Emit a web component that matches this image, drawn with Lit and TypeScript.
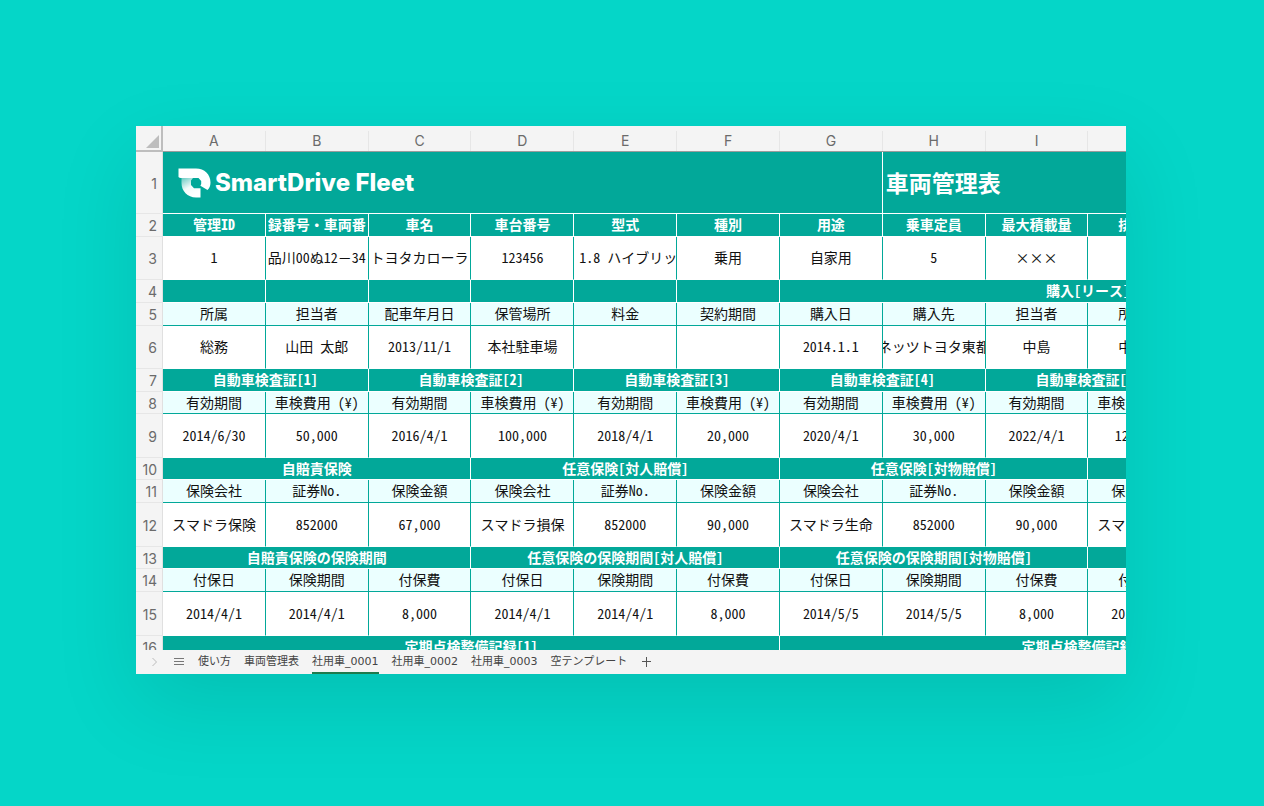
import { LitElement, html, css, nothing } from "lit";
import { customElement, state } from "lit/decorators.js";

type Kind = "band" | "head" | "data";
type Cell = string | [text: string, span: number];
interface Row {
  kind: Kind;
  height: number;
  cells: Cell[];
}

const COLUMNS = ["A", "B", "C", "D", "E", "F", "G", "H", "I", "J", "K", "L"];

const ROWS: Row[] = [
  {
    kind: "band",
    height: 23,
    cells: ["管理ID", "登録番号・車両番号", "車名", "車台番号", "型式", "種別", "用途", "乗車定員", "最大積載量", "排気量", "", ""],
  },
  {
    kind: "data",
    height: 43,
    cells: ["1", "品川00ぬ12－34", "トヨタカローラ", "123456", "1.8 ハイブリッド", "乗用", "自家用", "5", "×××", "", "", ""],
  },
  { kind: "band", height: 23, cells: ["", "", "", "", "", "", ["購入[リース]", 6]] },
  {
    kind: "head",
    height: 23,
    cells: ["所属", "担当者", "配車年月日", "保管場所", "料金", "契約期間", "購入日", "購入先", "担当者", "所在地", "", ""],
  },
  {
    kind: "data",
    height: 43,
    cells: ["総務", "山田 太郎", "2013/11/1", "本社駐車場", "", "", "2014.1.1", "ネッツトヨタ東都", "中島", "中央区", "", ""],
  },
  {
    kind: "band",
    height: 23,
    cells: [["自動車検査証[1]", 2], ["自動車検査証[2]", 2], ["自動車検査証[3]", 2], ["自動車検査証[4]", 2], ["自動車検査証[5]", 2], ["", 2]],
  },
  {
    kind: "head",
    height: 22,
    cells: ["有効期間", "車検費用 (¥)", "有効期間", "車検費用 (¥)", "有効期間", "車検費用 (¥)", "有効期間", "車検費用 (¥)", "有効期間", "車検費用 (¥)", "", ""],
  },
  {
    kind: "data",
    height: 44,
    cells: ["2014/6/30", "50,000", "2016/4/1", "100,000", "2018/4/1", "20,000", "2020/4/1", "30,000", "2022/4/1", "120,000", "", ""],
  },
  { kind: "band", height: 22, cells: [["自賠責保険", 3], ["任意保険[対人賠償]", 3], ["任意保険[対物賠償]", 3], ["", 3]] },
  {
    kind: "head",
    height: 23,
    cells: ["保険会社", "証券No.", "保険金額", "保険会社", "証券No.", "保険金額", "保険会社", "証券No.", "保険金額", "保険会社", "", ""],
  },
  {
    kind: "data",
    height: 44,
    cells: ["スマドラ保険", "852000", "67,000", "スマドラ損保", "852000", "90,000", "スマドラ生命", "852000", "90,000", "スマドラ保険", "", ""],
  },
  {
    kind: "band",
    height: 22,
    cells: [["自賠責保険の保険期間", 3], ["任意保険の保険期間[対人賠償]", 3], ["任意保険の保険期間[対物賠償]", 3], ["", 3]],
  },
  {
    kind: "head",
    height: 23,
    cells: ["付保日", "保険期間", "付保費", "付保日", "保険期間", "付保費", "付保日", "保険期間", "付保費", "付保日", "", ""],
  },
  {
    kind: "data",
    height: 44,
    cells: ["2014/4/1", "2014/4/1", "8,000", "2014/4/1", "2014/4/1", "8,000", "2014/5/5", "2014/5/5", "8,000", "2014/5/5", "", ""],
  },
  { kind: "band", height: 23, cells: [["定期点検整備記録[1]", 6], ["定期点検整備記録[2]", 6]] },
];

const SHEETS = ["使い方", "車両管理表", "社用車_0001", "社用車_0002", "社用車_0003", "空テンプレート"];

@customElement("fleet-logo")
class FleetLogo extends LitElement {
  static styles = css`
    :host {
      display: flex;
      align-items: center;
      gap: 4px;
      color: #fff;
      font: 800 24px/30px Inter, sans-serif;
    }
    svg {
      display: block;
      flex: none;
    }
  `;

  render() {
    return html`
      <svg width="33" height="30" viewBox="0 0 33 30" aria-hidden="true">
        <defs>
          <linearGradient id="fade" x1="0.1" y1="0" x2="0.6" y2="0.9">
            <stop offset="0" stop-color="#fff" stop-opacity="0.45" />
            <stop offset="0.55" stop-color="#fff" stop-opacity="0.95" />
            <stop offset="1" stop-color="#fff" />
          </linearGradient>
        </defs>
        <path fill="url(#fade)" d="M3.500 10H15L13 12.500V17L16 20.300H22.500V29.500H18C9.500 29.500 3.500 23 3.500 15Z" />
        <path fill="#fff" d="M0.500 0.500H18C26.500 0.500 32.500 6.500 32.500 14.500C32.500 17.500 31.500 20 29.500 22L22.400 17.800L23.200 16V13L20.500 10H4.500C2 10 0.500 9.500 0.500 9Z" />
      </svg>
      <span>SmartDrive Fleet</span>
    `;
  }
}

@customElement("fleet-sheet")
class FleetSheet extends LitElement {
  static styles = css`
    :host {
      display: block;
      overflow: hidden;
      background: #fff;
    }
    table {
      width: 1261px;
      table-layout: fixed;
      border-collapse: separate;
      border-spacing: 0;
    }
    .gutter {
      width: 27px;
    }
    th,
    td {
      box-sizing: border-box;
      padding: 0;
      font-weight: 400;
    }
    .letters {
      height: 26px;
    }
    .letters th {
      border-bottom: 1px solid #9a9c9c;
      background: #f4f4f4;
      color: #6b6b6b;
      font: 400 14px/20px Inter, sans-serif;
      vertical-align: bottom;
    }
    .letter {
      display: block;
      border-right: 1px solid #e6e6e6;
    }
    .letters .corner {
      border-right: 2px solid #bdbdbd;
      border-bottom: 2px solid #bdbdbd;
    }
    .corner svg {
      display: block;
      margin: 0 2px 2px auto;
    }
    .number {
      padding-top: 2px;
      padding-right: 5px;
      border-right: 1px solid #e0e0e0;
      border-bottom: 1px solid #e6e6e6;
      background: #f4f4f4;
      color: #6b6b6b;
      font: 400 14px/16px Inter, sans-serif;
      text-align: right;
    }
    .title td {
      height: 62px;
      border-right: 1px solid #fff;
      border-bottom: 1px solid #fff;
      background: #02a899;
    }
    .title .brand {
      padding-left: 15px;
    }
    .name {
      margin: 0;
      padding-bottom: 2px;
      padding-left: 3px;
      color: #fff;
      font: 700 23px/32px "Noto Sans CJK JP", sans-serif;
    }
    .text {
      display: flex;
      justify-content: center;
      padding-bottom: 2px;
      overflow: hidden;
      font: 400 14px/18px "Noto Sans Mono CJK JP", "Noto Sans CJK JP", sans-serif;
      white-space: pre;
    }
    .text span {
      flex: none;
    }
    .band td {
      border-right: 1px solid #fff;
      border-bottom: 1px solid #fff;
      background: #02a899;
      color: #fff;
    }
    .band .text {
      margin: 0 2px;
      font-weight: 700;
    }
    .head td {
      border-right: 1px solid #02a899;
      border-bottom: 1px solid #02a899;
      background: #ebffff;
      color: #111;
    }
    .data td {
      border-right: 1px solid #02a899;
      border-bottom: 1px solid #fff;
      background: #fff;
      color: #111;
    }
    .text.model {
      justify-content: flex-start;
      padding-left: 5px;
    }
  `;

  private cell(cell: Cell) {
    const [text, span] = typeof cell === "string" ? [cell, 1] : cell;
    const model = text.startsWith("1.8") ? "text model" : "text";
    return html`<td colspan=${span}>${text ? html`<div class=${model}><span>${text}</span></div>` : nothing}</td>`;
  }

  render() {
    return html`
      <table>
        <colgroup>
          <col class="gutter" />
          ${COLUMNS.map(() => html`<col />`)}
        </colgroup>
        <thead>
          <tr class="letters">
            <th class="corner" aria-label="すべて選択">
              <svg width="13" height="13" viewBox="0 0 13 13" aria-hidden="true"><path fill="#bdbdbd" d="M13 0V13H0Z" /></svg>
            </th>
            ${COLUMNS.map((c) => html`<th scope="col"><span class="letter">${c}</span></th>`)}
          </tr>
        </thead>
        <tbody>
          <tr class="title">
            <th class="number" scope="row">1</th>
            <td class="brand" colspan="7"><fleet-logo></fleet-logo></td>
            <td colspan="5"><h1 class="name">車両管理表</h1></td>
          </tr>
          ${ROWS.map(
            (row, i) => html`<tr class=${row.kind} style="height:${row.height}px">
              <th class="number" scope="row">${i + 2}</th>
              ${row.cells.map((c) => this.cell(c))}
            </tr>`
          )}
        </tbody>
      </table>
    `;
  }
}

@customElement("app-root")
class AppRoot extends LitElement {
  static styles = css`
    :host {
      display: flex;
      box-sizing: border-box;
      height: 100vh;
      padding: 126px 138px 132px 136px;
      background: #05d6c8;
    }
    .window {
      display: flex;
      flex: 1;
      flex-direction: column;
      min-width: 0;
      box-shadow: 0 30px 80px rgba(0, 0, 0, 0.1);
    }
    fleet-sheet {
      flex: 1;
      min-height: 0;
    }
    .tabs {
      display: flex;
      align-items: stretch;
      gap: 13px;
      height: 24px;
      padding-left: 12px;
      overflow: hidden;
      background: #f4f4f4;
    }
    button {
      display: flex;
      flex: none;
      align-items: center;
      box-sizing: border-box;
      padding: 2px 0 0;
      border: 0;
      border-bottom: 2px solid transparent;
      background: none;
      color: #444;
      font: 400 11px/20px "DejaVu Sans", "Noto Sans CJK JP", sans-serif;
      white-space: nowrap;
    }
    .active {
      border-bottom-color: #1e7a4c;
    }
    svg {
      display: block;
    }
  `;

  @state() private active = 2;

  render() {
    return html`
      <main class="window">
        <fleet-sheet></fleet-sheet>
        <nav class="tabs" aria-label="シート">
          <button aria-label="次のシート">
            <svg width="12" height="12" viewBox="0 0 12 12" fill="none" stroke="#bbb"><path d="M4.500 2L8.500 6L4.500 10" /></svg>
          </button>
          <button aria-label="シート一覧">
            <svg width="12" height="12" viewBox="0 0 12 12" fill="none" stroke="#777"><path d="M1 2.500H11M1 5.500H11M1 8.500H11" /></svg>
          </button>
          ${SHEETS.map(
            (s, i) => html`<button class=${i === this.active ? "active" : ""} @click=${() => (this.active = i)}>${s}</button>`
          )}
          <button aria-label="シートを追加">
            <svg width="12" height="12" viewBox="0 0 12 12" fill="none" stroke="#555"><path d="M6.500 1V11M2 5.500H11" /></svg>
          </button>
        </nav>
      </main>
    `;
  }
}
